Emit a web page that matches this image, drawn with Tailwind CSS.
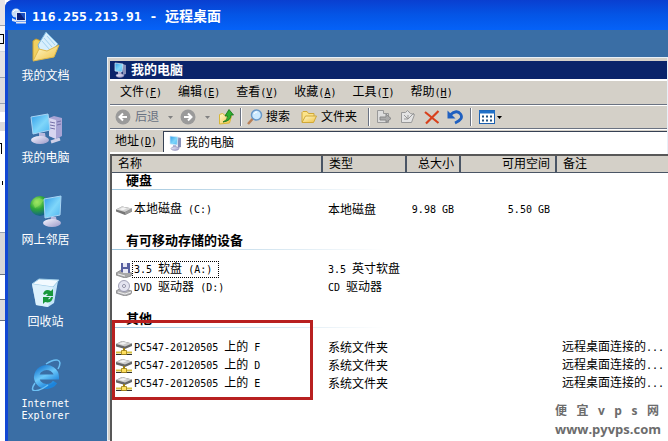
<!DOCTYPE html>
<html lang="zh-CN">
<head>
    <meta charset="UTF-8">
    <meta name="viewport" content="width=device-width, initial-scale=1.0">
    <script src="https://cdn.jsdelivr.net/npm/@tailwindcss/browser@4"></script>
    <title>116.255.213.91 - 远程桌面</title>
</head>
<body class="bg-white text-black text-[12px] leading-[18px] font-['DejaVu_Sans_Mono','Noto_Sans_CJK_SC',monospace] overflow-hidden">

    <!-- Shared icons -->
    <svg class="absolute size-0">
        <defs>
            <linearGradient id="screen" x1="0" y1="0" x2="1" y2="1"><stop offset="0" stop-color="#2f9be8"/><stop offset="0.55" stop-color="#7fd6fa"/><stop offset="1" stop-color="#4db4f0"/></linearGradient>
            <linearGradient id="metal" x1="0" y1="0" x2="1" y2="1"><stop offset="0" stop-color="#f7f7ff"/><stop offset="1" stop-color="#9a98c8"/></linearGradient>
            <linearGradient id="paper" x1="0" y1="0" x2="1" y2="1"><stop offset="0" stop-color="#fffbd0"/><stop offset="1" stop-color="#f0c040"/></linearGradient>
            <radialGradient id="globe" cx="0.35" cy="0.3" r="0.8"><stop offset="0" stop-color="#b8f070"/><stop offset="0.45" stop-color="#2fa838"/><stop offset="1" stop-color="#0b4f9c"/></radialGradient>
            <linearGradient id="ie" x1="0" y1="0" x2="0.6" y2="1"><stop offset="0" stop-color="#1878d0"/><stop offset="0.5" stop-color="#6cc8fa"/><stop offset="1" stop-color="#1c84dc"/></linearGradient>
        </defs>
        <symbol id="computer" viewBox="0 0 16 16">
            <path d="M10 2l4 1v9l-3 1z" fill="#8890b8"/>
            <path d="M3 1l8 1-1 8-7-1z" fill="url(#screen)" stroke="#d8e8f8" stroke-width="0.7"/>
            <path d="M6 10h3l1 3H6z" fill="#b8b8d8"/>
            <ellipse cx="8" cy="13.6" rx="4" ry="1.8" fill="url(#metal)" stroke="#7c7ca8" stroke-width="0.5"/>
        </symbol>
        <symbol id="disk" viewBox="0 0 16 16">
            <path d="M0 7.5L6 4.5 16 6.5v3L9 13 0 9.5z" fill="#777"/>
            <path d="M0 7.5L6 4.5 16 6.5 9 10z" fill="#d4d4d4"/>
            <path d="M3 7.3L7 5.6l4 .9-4 1.7z" fill="#f4f4f4"/>
            <path d="M9 10l7-3.5v3L9 13z" fill="#999"/>
        </symbol>
        <symbol id="netdisk" viewBox="0 0 16 16">
            <path d="M0 4l6-3 10 2.500v2.500L9 9 0 6.500z" fill="#666"/>
            <path d="M0 4l6-3 10 2.500L9 6.500z" fill="#ccc"/>
            <path d="M3 3.800L7 2l4 1-4 1.800z" fill="#f2f2f2"/>
            <path d="M8 8v4" stroke="#a08010" stroke-width="2"/>
            <path d="M0 12.500h16" stroke="#d8c040" stroke-width="2"/>
            <path d="M0 14.500h16" stroke="#333"/>
            <path d="M5.500 10.500h5v4h-5z" fill="#ffe060" stroke="#a08010" stroke-width="0.8"/>
        </symbol>
        <symbol id="folder" viewBox="0 0 16 16">
            <path d="M1 13V3.500l1-1h4l1.500 2H13V7" fill="#fbe38a" stroke="#d0a838"/>
            <path d="M1 13.500L4.500 7H15.500L12.500 13.500z" fill="url(#paper)" stroke="#d0a838"/>
        </symbol>
    </svg>

    <div class="flex min-h-screen">

        <!-- Edge of the window behind -->
        <div class="w-[5px] shrink-0 flex flex-col overflow-hidden bg-white">
            <div class="h-[26px] bg-[#e6e4e6] border-b border-gray-400"></div>
            <div class="h-[26px] bg-[#f4f4f6] border-b border-gray-300 flex items-center"><div class="w-[4px] h-[10px] border-r border-y border-black"></div></div>
            <div class="h-[26px] bg-[#e4e2e4] border-b border-gray-400"></div>
            <div class="h-[26px] bg-[#dedcde] border-b border-gray-400"></div>
            <div class="h-[8px] bg-[#e2e0e2]"></div>
            <div class="h-[10px] bg-white"></div>
            <div class="h-[9px] bg-[#dcdadc]"></div>
            <div class="h-[12px]"></div>
            <div class="h-[11px] w-[2px] border-r border-t border-black"></div>
            <div class="h-[27px]"></div>
            <div class="h-[4px] w-[3px] border-r border-black"></div>
            <div class="h-[47px]"></div>
            <div class="h-[42px] bg-[#d8d6d8] border-t border-gray-400"></div>
            <div class="h-[26px] border-y border-gray-500"></div>
            <div class="h-[21px] bg-[#dcdadc] border-b border-gray-500"></div>
        </div>

        <!-- Remote desktop window -->
        <div class="flex-1 min-w-0 flex flex-col rounded-tl-lg overflow-hidden bg-[#1248d4]">
            <div class="h-[30px] shrink-0 flex items-center gap-[5px] pl-[6px] pt-[2px] bg-linear-to-b from-[#0a3fd0] via-[#0455e6] to-[#0562f8] text-white">
                <svg class="size-4" viewBox="0 0 16 16">
                    <circle cx="5" cy="5" r="4.500" fill="#c8dcf4"/>
                    <path d="M2 4a4 4 0 0 1 5-2" stroke="#fff" fill="none"/>
                    <path d="M1 10l4 2v2l-4-1z" fill="#dfe6f4"/>
                    <rect x="5.500" y="4.500" width="9" height="8" fill="#0b1f78" stroke="#dce8fa"/>
                    <path d="M9 5h5v7z" fill="#1c50c0"/>
                    <path d="M5 14.500h10" stroke="#e8e8f0" stroke-width="2"/>
                </svg>
                <h1 class="text-[13px] font-bold whitespace-pre">116.255.213.91 - <span class="text-[14px]">远程桌面</span></h1>
            </div>

            <div class="flex-1 flex ml-[3px] bg-[#3a6ea5]">

                <!-- Desktop icons -->
                <div class="w-[75px] shrink-0 pt-px flex flex-col text-white text-center leading-[12px]">
                    <a href="#" class="h-[82px] flex flex-col items-center gap-[7px]">
                        <svg class="size-8" viewBox="0 0 32 32">
                            <path d="M3 29V10l3-2 5 2 8 8z" fill="#f0d060" stroke="#c8a030"/>
                            <path d="M8 14L16 1l12 12-8 9-9 1z" fill="#d8effc" stroke="#78b4dc"/>
                            <path d="M14 7l8 9M12 10l8 9M17 5l8 9" stroke="#a0d0f0"/>
                            <path d="M3 30l6-12 8 2 12-6-5 12z" fill="url(#paper)" stroke="#e0b848"/>
                        </svg>
                        <span>我的文档</span>
                    </a>
                    <a href="#" class="h-[82px] flex flex-col items-center gap-[7px]">
                        <svg class="size-8" viewBox="0 0 32 32">
                            <path d="M19 5l5-2 8 2v18l-6 3-7-3z" fill="#a8a4d4"/>
                            <path d="M19 5l7 2v19l-7-3z" fill="#d8d6f0"/>
                            <path d="M20 9l5 1M20 12l5 1M20 15l5 1M27 9l4-1M27 12l4-1" stroke="#7470a8"/>
                            <path d="M1 4l17-3 2 16-17 4z" fill="url(#screen)" stroke="#a8d4f4"/>
                            <path d="M9 20h6l1 7H9z" fill="#b8b8dc"/>
                            <ellipse cx="10" cy="27" rx="9" ry="4" fill="url(#metal)"/>
                            <path d="M21 29l9-3" stroke="#d0d0e8" stroke-width="3"/>
                        </svg>
                        <span>我的电脑</span>
                    </a>
                    <a href="#" class="h-[82px] flex flex-col items-center gap-[7px]">
                        <svg class="size-8" viewBox="0 0 32 32">
                            <circle cx="10" cy="11" r="10" fill="url(#globe)"/>
                            <path d="M3 8l6-5 5 2-4 5-5 3z" fill="#8ce058" opacity="0.6"/>
                            <path d="M14 4l17-3-1 19-15 3z" fill="url(#screen)" stroke="#a8d4f4"/>
                            <path d="M21 22h5l1 6h-7z" fill="#b8b8dc"/>
                            <ellipse cx="22" cy="28" rx="9" ry="4" fill="url(#metal)"/>
                        </svg>
                        <span>网上邻居</span>
                    </a>
                    <a href="#" class="h-[82px] flex flex-col items-center gap-[7px]">
                        <svg class="size-8" viewBox="0 0 32 32">
                            <path d="M2 7l26-3-4 22-6 4-12-2z" fill="#c4e4f8"/>
                            <path d="M2 7L9 2l20 1-6 7z" fill="#f2faff" stroke="#9ccce8"/>
                            <path d="M2 7l21 3-5 20-12-2z" fill="#e4f4fd" opacity="0.8"/>
                            <path d="M13 17q2-6 8-3l2-2v7h-7l2-2q-2-1-3 1z" fill="#18983c"/>
                            <path d="M23 20q-1 7-8 5l-2 2v-7h7l-2 2q2 1 3-2z" fill="#18983c"/>
                        </svg>
                        <span>回收站</span>
                    </a>
                    <a href="#" class="h-[82px] flex flex-col items-center gap-[7px]">
                        <svg class="size-8" viewBox="0 0 32 32">
                            <path d="M25 23a10 9.500 0 1 1 1.500-5H9" fill="none" stroke="url(#ie)" stroke-width="5"/>
                            <path d="M5 24C-3 36 10 32 18 26M16 5C25-1 34-1 28 10" fill="none" stroke="#6cc0f4" stroke-width="1.500"/>
                        </svg>
                        <span class="text-[10px]">Internet<br>Explorer</span>
                    </a>
                </div>

                <!-- My Computer window -->
                <div class="flex-1 min-w-0 mt-[27px] ml-[24px] border-l-[3px] border-t-[4px] border-[#d4d0c8] outline outline-[#e8f0f8] -outline-offset-1 bg-white flex flex-col">
                    <div class="h-[18px] flex items-center gap-[3px] pl-[2px] bg-[#0a246a] text-white">
                        <svg class="size-4"><use href="#computer"/></svg>
                        <h2 class="text-[13px] font-bold">我的电脑</h2>
                    </div>

                    <nav class="h-[26px] flex items-center gap-4 pl-[10px] bg-[#d4d0c8] border-t-2 border-b border-t-white border-b-gray-500 whitespace-nowrap">
                        <button>文件<span class="text-[10px]">(<u>F</u>)</span></button>
                        <button>编辑<span class="text-[10px]">(<u>E</u>)</span></button>
                        <button>查看<span class="text-[10px]">(<u>V</u>)</span></button>
                        <button>收藏<span class="text-[10px]">(<u>A</u>)</span></button>
                        <button>工具<span class="text-[10px]">(<u>T</u>)</span></button>
                        <button>帮助<span class="text-[10px]">(<u>H</u>)</span></button>
                    </nav>

                    <div class="h-[24px] flex items-center pl-[5px] bg-[#d4d0c8] border-t border-b border-t-white border-b-gray-500 whitespace-nowrap">
                        <button class="flex items-center gap-1 text-gray-500" disabled>
                            <svg class="size-4" viewBox="0 0 16 16"><circle cx="8" cy="8" r="7.500" fill="#9a9a9a"/><path d="M12 8H5M8 4.500L4.500 8 8 11.500" fill="none" stroke="#fff" stroke-width="2"/></svg>
                            后退
                        </button>
                        <svg class="w-[5px] h-[3px] ml-[9px]" viewBox="0 0 5 3"><path d="M0 0h5L2.500 3z" fill="#808080"/></svg>
                        <button class="ml-[7px]" aria-label="前进" disabled>
                            <svg class="size-4" viewBox="0 0 16 16"><circle cx="8" cy="8" r="7.500" fill="#9a9a9a"/><path d="M4 8h7M8 4.500L11.500 8 8 11.500" fill="none" stroke="#fff" stroke-width="2"/></svg>
                        </button>
                        <svg class="w-[5px] h-[3px] ml-[9px]" viewBox="0 0 5 3"><path d="M0 0h5L2.500 3z" fill="#808080"/></svg>
                        <button class="ml-[8px]" aria-label="向上">
                            <svg class="size-4" viewBox="0 0 16 16"><path d="M1.500 15V5.500l3-1 2 1.500h5l2 1-2 7z" fill="url(#paper)" stroke="#d8b838"/><path d="M5 13q5-2 4.500-6H7l4-6.500L15.500 6H13q0 6-8 7z" fill="#30b030" stroke="#107018" stroke-width="0.8"/></svg>
                        </button>
                        <div class="w-[2px] h-[18px] ml-[6px] border-l border-r border-l-gray-500 border-r-white"></div>
                        <button class="ml-[5px] flex items-center gap-[3px]">
                            <svg class="size-4" viewBox="0 0 16 16"><path d="M6 9.500L1 15" stroke="#b88058" stroke-width="2.500"/><circle cx="9.500" cy="6" r="5" fill="#cceaff" stroke="#6898c8" stroke-width="1.500"/><path d="M7 5a3 3 0 0 1 3-2" stroke="#fff" fill="none"/></svg>
                            搜索
                        </button>
                        <button class="ml-[11px] flex items-center gap-1">
                            <svg class="size-4"><use href="#folder"/></svg>
                            文件夹
                        </button>
                        <div class="w-[2px] h-[18px] ml-[11px] border-l border-r border-l-gray-500 border-r-white"></div>
                        <button class="ml-[6px]" aria-label="移至" disabled>
                            <svg class="size-4" viewBox="0 0 16 16"><path d="M1.500 1.500h6v3h5v9h-11z" fill="#ddd" stroke="#999"/><path d="M4 8h6V5l5 4.500-5 4V11H4z" fill="#aaa" stroke="#888"/></svg>
                        </button>
                        <button class="ml-[8px]" aria-label="复制到" disabled>
                            <svg class="size-4" viewBox="0 0 16 16"><path d="M1.500 3.500h4l2-2 3 3 4 1-3 8h-10z" fill="#e4e4e4" stroke="#999"/><path d="M4 6l4 4 6-6M8 10V6M8 10H4" fill="none" stroke="#999"/></svg>
                        </button>
                        <button class="ml-[8px]" aria-label="删除">
                            <svg class="size-4" viewBox="0 0 16 16"><path d="M1 3L14.500 14M14.500 2L2 14.500" stroke="#d8401c" stroke-width="2.200"/></svg>
                        </button>
                        <button class="ml-[7px]" aria-label="撤消">
                            <svg class="size-4" viewBox="0 0 16 16"><path d="M3 6q7-6 10.500-1t-5.500 9" fill="none" stroke="#2060c0" stroke-width="2.800"/><path d="M.5 1.500v8h8z" fill="#2060c0"/></svg>
                        </button>
                        <div class="w-[2px] h-[18px] ml-[7px] border-l border-r border-l-gray-500 border-r-white"></div>
                        <button class="ml-[7px] flex items-center gap-[2px]" aria-label="查看">
                            <svg class="size-4" viewBox="0 0 16 16"><rect x=".5" y="1.500" width="15" height="13" fill="#fff" stroke="#1c60b0"/><path d="M0 3h16" stroke="#2070c8" stroke-width="3"/><path d="M3 7.500h2m2 0h2m2 0h2M3 11.500h2m2 0h2m2 0h2" stroke="#205080" stroke-width="2"/></svg>
                            <svg class="w-[5px] h-[3px]" viewBox="0 0 5 3"><path d="M0 0h5L2.500 3z"/></svg>
                        </button>
                    </div>

                    <div class="h-[25px] flex items-center pl-[5px] bg-[#d4d0c8] border-t border-b-2 border-t-white border-b-white whitespace-nowrap">
                        <label for="address" class="w-[48px]">地址<span class="text-[10px]">(<u>D</u>)</span></label>
                        <div class="flex-1 h-[21px] flex items-center gap-[3px] pl-[3px] pt-[2px] bg-white border-t border-l border-gray-700">
                            <svg class="size-4"><use href="#computer"/></svg>
                            <input id="address" type="text" value="我的电脑" class="flex-1 min-w-0 h-[18px] outline-none">
                        </div>
                    </div>

                    <!-- File list -->
                    <div class="relative flex-1 border-t-2 border-l-2 border-[#585858] bg-white">
                        <table class="w-full table-fixed whitespace-nowrap leading-[14px]">
                            <colgroup>
                                <col class="w-[210px]"><col class="w-[84px]"><col class="w-[54px]"><col class="w-[96px]"><col>
                            </colgroup>
                            <thead>
                                <tr class="h-[16px] bg-[#d4d0c8] text-left">
                                    <th class="font-normal p-0 pl-[6px] border-r-2 border-b border-gray-600">名称</th>
                                    <th class="font-normal p-0 pl-[6px] border-r-2 border-b border-gray-600">类型</th>
                                    <th class="font-normal p-0 pr-[5px] border-r-2 border-b border-gray-600 text-right">总大小</th>
                                    <th class="font-normal p-0 pr-[5px] border-r-2 border-b border-gray-600 text-right">可用空间</th>
                                    <th class="font-normal p-0 pl-[6px] border-b border-gray-600">备注</th>
                                </tr>
                            </thead>
                            <tbody>
                                <tr>
                                    <th colspan="5" class="p-0 pb-[11px] text-left text-[13px]">
                                        <div class="h-[16px] pl-[14px] leading-[16px]">硬盘</div>
                                        <div class="h-px w-[272px] bg-linear-to-r from-[#9cc4dc] to-white"></div>
                                    </th>
                                </tr>
                                <tr class="h-[18px]">
                                    <td class="p-0 pl-1"><div class="flex items-center gap-[2px]"><svg class="size-4"><use href="#disk"/></svg><span>本地磁盘<span class="text-[10px]"> (C:)</span></span></div></td>
                                    <td class="p-0 pl-[6px]">本地磁盘</td>
                                    <td class="p-0 pr-[6px] text-right text-[10px]">9.98 GB</td>
                                    <td class="p-0 pr-[6px] text-right text-[10px]">5.50 GB</td>
                                    <td class="p-0"></td>
                                </tr>
                            </tbody>
                            <tbody>
                                <tr>
                                    <th colspan="5" class="p-0 pt-[14px] pb-[11px] text-left text-[13px]">
                                        <div class="h-[16px] pl-[14px] leading-[16px]">有可移动存储的设备</div>
                                        <div class="h-px w-[272px] bg-linear-to-r from-[#9cc4dc] to-white"></div>
                                    </th>
                                </tr>
                                <tr class="h-[18px]">
                                    <td class="p-0 pl-1">
                                        <div class="flex items-center">
                                            <svg class="size-4" viewBox="0 0 16 16"><path d="M0 11l5-3 11 3-1 3-6 2-9-3z" fill="#a8a8a8" stroke="#707070" stroke-width="0.6"/><path d="M5 1l9 0v10l-9-1z" fill="#5860a0"/><path d="M7 1h4v4H7zM7 7h5v4H7z" fill="#e8e8f4"/><path d="M2 12l7 2" stroke="#eee"/></svg>
                                            <span class="pl-px pr-[6px] border border-dotted border-black text-[10px]">3.5 <span class="text-[12px]">软盘</span> (A:)</span>
                                        </div>
                                    </td>
                                    <td class="p-0 pl-[6px] text-[10px]">3.5 <span class="text-[12px]">英寸软盘</span></td>
                                    <td colspan="3" class="p-0"></td>
                                </tr>
                                <tr class="h-[18px]">
                                    <td class="p-0 pl-1">
                                        <div class="flex items-center gap-[2px]">
                                            <svg class="size-4" viewBox="0 0 16 16"><path d="M0 11l5-3 11 3-1 3-6 2-9-3z" fill="#b0b0b4" stroke="#707070" stroke-width="0.6"/><circle cx="8" cy="6" r="5.500" fill="#e4e4f0" stroke="#8c8ca4" stroke-width="0.8"/><circle cx="8" cy="6" r="1.500" fill="#fff" stroke="#8c8ca4"/><path d="M2 12l7 2 6-2" stroke="#eee" fill="none"/></svg>
                                            <span class="text-[10px]">DVD <span class="text-[12px]">驱动器</span> (D:)</span>
                                        </div>
                                    </td>
                                    <td class="p-0 pl-[6px] text-[10px]">CD <span class="text-[12px]">驱动器</span></td>
                                    <td colspan="3" class="p-0"></td>
                                </tr>
                            </tbody>
                            <tbody>
                                <tr>
                                    <th colspan="5" class="p-0 pt-[14px] pb-[11px] text-left text-[13px]">
                                        <div class="h-[16px] pl-[14px] leading-[16px]">其他</div>
                                        <div class="h-px w-[272px] bg-linear-to-r from-[#9cc4dc] to-white"></div>
                                    </th>
                                </tr>
                                <tr class="h-[18px]">
                                    <td class="p-0 pl-1"><div class="flex items-center gap-[2px]"><svg class="size-4"><use href="#netdisk"/></svg><span class="text-[10px]">PC547-20120505 <span class="text-[12px]">上的</span> F</span></div></td>
                                    <td class="p-0 pl-[6px]">系统文件夹</td>
                                    <td colspan="2" class="p-0"></td>
                                    <td class="p-0 pl-[6px]">远程桌面连接的<span class="text-[10px]">...</span></td>
                                </tr>
                                <tr class="h-[18px]">
                                    <td class="p-0 pl-1"><div class="flex items-center gap-[2px]"><svg class="size-4"><use href="#netdisk"/></svg><span class="text-[10px]">PC547-20120505 <span class="text-[12px]">上的</span> D</span></div></td>
                                    <td class="p-0 pl-[6px]">系统文件夹</td>
                                    <td colspan="2" class="p-0"></td>
                                    <td class="p-0 pl-[6px]">远程桌面连接的<span class="text-[10px]">...</span></td>
                                </tr>
                                <tr class="h-[18px]">
                                    <td class="p-0 pl-1"><div class="flex items-center gap-[2px]"><svg class="size-4"><use href="#netdisk"/></svg><span class="text-[10px]">PC547-20120505 <span class="text-[12px]">上的</span> E</span></div></td>
                                    <td class="p-0 pl-[6px]">系统文件夹</td>
                                    <td colspan="2" class="p-0"></td>
                                    <td class="p-0 pl-[6px]">远程桌面连接的<span class="text-[10px]">...</span></td>
                                </tr>
                            </tbody>
                        </table>

                        <!-- Highlight around the mapped drives -->
                        <div class="absolute left-0 top-[164px] w-[201px] h-[80px] border-[3px] border-[#b82020]"></div>

                        <!-- Watermark -->
                        <div class="absolute right-[9px] bottom-[4px] w-[104px] flex flex-col gap-[2px] text-[#6c6c6c] leading-[16px] font-['Open_Sans','Noto_Sans_CJK_SC',sans-serif]">
                            <div class="flex justify-between text-[12px] font-bold"><span>便</span><span>宜</span><span>v</span><span>p</span><span>s</span><span>网</span></div>
                            <div class="text-[13px] font-bold">www.pyvps.com</div>
                        </div>
                    </div>
                </div>
            </div>
        </div>
    </div>
</body>
</html>
